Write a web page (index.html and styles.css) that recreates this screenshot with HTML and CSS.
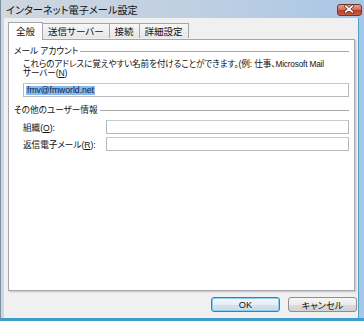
FILE: index.html
```html
<!DOCTYPE html>
<html lang="ja">
<head>
<meta charset="utf-8">
<link rel="stylesheet" href="styles.css">
</head>
<body>
<div class="window">
  <div class="titlebar">
    <span class="title">インターネット電子メール設定</span>
    <span class="close"><svg width="25" height="12" viewBox="0 0 25 12"><path d="M9 3 L16 9 M16 3 L9 9" stroke="#5a2a20" stroke-width="3.2" stroke-linecap="round"/><path d="M9 3 L16 9 M16 3 L9 9" stroke="#ffffff" stroke-width="1.8" stroke-linecap="round"/></svg></span>
  </div>
  <div class="client">
    <div class="tabs">
      <div class="tab active">全般</div>
      <div class="tab">送信サーバー</div>
      <div class="tab">接続</div>
      <div class="tab">詳細設定</div>
    </div>
    <div class="panel">
      <div class="group-head"><span>メール アカウント</span><i class="rule"></i></div>
      <div class="indent">
        <p class="desc">これらのアドレスに覚えやすい名前を付けることができます。(例: 仕事、<span class="latin">Microsoft Mail</span><br>サーバー(<u>N</u>)</p>
        <div class="input wide"><span class="sel">fmv@fmworld.net</span></div>
      </div>
      <div class="group-head second"><span>その他のユーザー情報</span><i class="rule"></i></div>
      <div class="indent">
        <div class="row"><label>組織(<u>O</u>):</label><div class="input"></div></div>
        <div class="row"><label>返信電子メール(<u>R</u>):</label><div class="input"></div></div>
      </div>
    </div>
    <div class="buttons">
      <div class="btn default">OK</div>
      <div class="btn">キャンセル</div>
    </div>
  </div>
</div>
</body>
</html>
```
FILE: styles.css
```css
html, body {
  margin: 0;
  padding: 0;
  width: 364px;
  height: 321px;
  overflow: hidden;
  background: #dbe4ee;
}
body {
  font-family: "Liberation Sans", "Noto Sans CJK JP", sans-serif;
  font-size: 8.6px;
  color: #111;
  font-feature-settings: "palt";
}
.window {
  width: 364px;
  height: 321px;
  box-sizing: border-box;
  border-left: 1px solid #7d8fa3;
  border-bottom: 3px solid #3f9ccb;
  background: linear-gradient(to right, #cfd7e0, #bccee2 60%, #a9c6e6);
  display: flex;
  flex-direction: column;
}
.titlebar {
  height: 18px;
  display: flex;
  align-items: center;
  justify-content: space-between;
  padding: 0 2px 0 5px;
}
.title {
  font-size: 10.2px;
  color: #111;
  padding-top: 1px;
}
.close {
  width: 25px;
  height: 12px;
  border: 1px solid #7a3428;
  border-radius: 3px;
  background: linear-gradient(#e8a090, #d0705a 45%, #b8402c 55%, #c85c44);
  box-sizing: border-box;
  display: flex;
  align-items: center;
  justify-content: center;
  margin-top: 1px;
}
.close svg { display: block; margin-left: -1px; margin-top: -1px; }
.client {
  flex: 1;
  margin: 0 5px 0 3px;
  background: #f0f0f0;
  border-right: 1px solid #4e9fcc;
  display: flex;
  flex-direction: column;
  padding: 3px 1px 0 4px;
}
.tabs {
  display: flex;
  align-items: flex-end;
  height: 18px;
  position: relative;
  z-index: 1;
}
.tab {
  height: 15px;
  box-sizing: border-box;
  border: 1px solid #a3a6ad;
  border-bottom: none;
  background: linear-gradient(#f7f7f7, #e6e6e6);
  padding: 0 5px;
  display: flex;
  align-items: center;
  margin-left: -1px;
  margin-bottom: 1px;
  font-size: 9.5px;
}
.tab.active {
  height: 18px;
  background: #fff;
  padding: 0 7px 1px 7px;
  margin-left: 0;
  margin-bottom: -1px;
}
.panel {
  height: 252px;
  box-sizing: border-box;
  background: #fff;
  border: 1px solid #a3a6ad;
  box-shadow: 1px 1px 0 #cfcfcf, 2px 2px 0 #e2e2e2;
  padding: 5px 5px 0 5px;
  margin-right: 2px;
}
.group-head {
  display: flex;
  align-items: center;
  height: 12px;
  line-height: 12px;
}
.group-head.second { margin-top: 7px; }
.group-head span { padding-right: 2px; }
.rule {
  flex: 1;
  height: 0;
  border-top: 1px solid #a8a8a8;
  margin-top: 1px;
}
.indent { padding-left: 9px; }
.desc {
  margin: 3px 0 0 0;
  line-height: 9px;
  height: 19px;
  letter-spacing: -0.1px;
}
.latin { font-size: 8.2px; letter-spacing: -0.15px; }
.input {
  height: 14px;
  box-sizing: border-box;
  border: 1px solid #b5b9bd;
  border-top-color: #c6c9cc;
  background: #fff;
  flex: 1;
}
.input.wide {
  margin-top: 4px;
  display: flex;
  align-items: center;
  padding-left: 2px;
}
.sel {
  background: #86b9ec;
  color: #0b1a4a;
  line-height: 9px;
  height: 9px;
  padding: 0 1px;
}
.row {
  display: flex;
  align-items: center;
  height: 14px;
  margin-top: 3px;
}
.row:first-child { margin-top: 4px; }
.row label { width: 83px; }
u { text-decoration: underline; text-underline-offset: 1px; }
.buttons {
  display: flex;
  justify-content: flex-end;
  gap: 8px;
  margin-top: 6px;
  padding-right: 0;
}
.btn {
  width: 69px;
  height: 15px;
  box-sizing: border-box;
  border: 1px solid #8f8f8f;
  border-radius: 3px;
  background: linear-gradient(#f6f6f6, #ebebeb 50%, #dcdcdc 51%, #d2d2d2);
  display: flex;
  align-items: center;
  justify-content: center;
  font-size: 9.2px;
}
.btn.default {
  border-color: #3c7fb1;
  box-shadow: inset 0 0 0 1px #8fd0f2;
  background: linear-gradient(#f4f8fb, #e5eef5 50%, #d4e3ee 51%, #c8dbe8);
}
```
